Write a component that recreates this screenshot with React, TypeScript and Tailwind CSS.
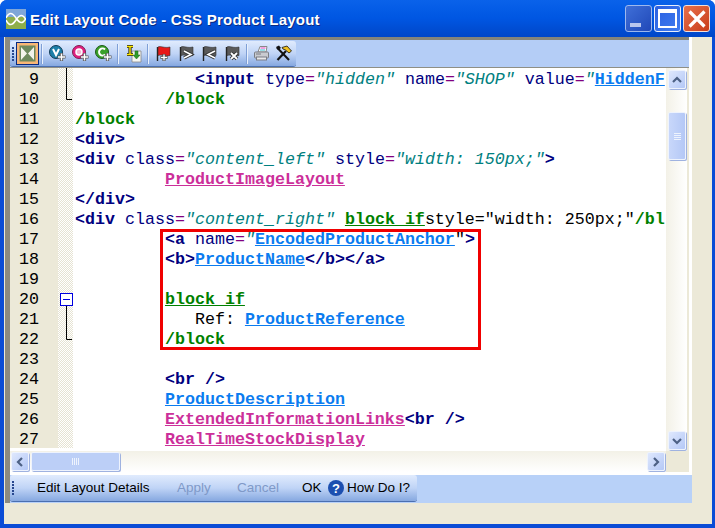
import React from "react";

const mono = "font-['Liberation_Mono','Courier_New',monospace]";
const ui = "font-['Liberation_Sans',Arial,sans-serif]";

const T = ({ c }: { c: string }) => <span className="font-bold text-[#000080]">{c}</span>;
const A = ({ c }: { c: string }) => <span className="text-[#000080]">{c}</span>;
const E = () => <span className="text-[#800080]">=</span>;
const S = ({ c }: { c: string }) => <span className="italic text-[#008080]">{c}</span>;
const L = ({ c }: { c: string }) => <span className="font-bold text-[#0a7cf0] underline">{c}</span>;
const P = ({ c }: { c: string }) => <span className="font-bold text-[#cc2f9a] underline">{c}</span>;
const G = ({ c, u }: { c: string; u?: boolean }) => (
  <span className={u ? "font-bold text-[#008000] underline" : "font-bold text-[#008000]"}>{c}</span>
);

const lines: { n: number; fold?: "end" | "open" | "line"; code?: React.ReactNode }[] = [
  {
    n: 9,
    fold: "line",
    code: (
      <>
        {"            "}
        <T c="<input" /> <A c="type" />
        <E />
        <S c={'"hidden"'} /> <A c="name" />
        <E />
        <S c={'"SHOP"'} /> <A c="value" />
        <E />
        <S c={'"'} />
        <L c="HiddenF" />
      </>
    ),
  },
  { n: 10, fold: "end", code: <>{"         "}<G c="/block" /></> },
  { n: 11, code: <G c="/block" /> },
  { n: 12, code: <T c="<div>" /> },
  {
    n: 13,
    code: (
      <>
        <T c="<div" /> <A c="class" />
        <E />
        <S c={'"content_left"'} /> <A c="style" />
        <E />
        <S c={'"width: 150px;"'} />
        <T c=">" />
      </>
    ),
  },
  { n: 14, code: <>{"         "}<P c="ProductImageLayout" /></> },
  { n: 15, code: <T c="</div>" /> },
  {
    n: 16,
    code: (
      <>
        <T c="<div" /> <A c="class" />
        <E />
        <S c={'"content_right"'} /> <G c="block if" u />
        {'style="width: 250px;"'}
        <G c="/bl" />
      </>
    ),
  },
  {
    n: 17,
    code: (
      <>
        {"         "}
        <T c="<a" /> <A c="name" />
        <E />
        <S c={'"'} />
        <L c="EncodedProductAnchor" />
        {'"'}
        <T c=">" />
      </>
    ),
  },
  {
    n: 18,
    code: (
      <>
        {"         "}
        <T c="<b>" />
        <L c="ProductName" />
        <T c="</b></a>" />
      </>
    ),
  },
  { n: 19 },
  { n: 20, fold: "open", code: <>{"         "}<G c="block if" u /></> },
  { n: 21, fold: "line", code: <>{"            Ref: "}<L c="ProductReference" /></> },
  { n: 22, fold: "end", code: <>{"         "}<G c="/block" /></> },
  { n: 23 },
  { n: 24, code: <>{"         "}<T c="<br />" /></> },
  { n: 25, code: <>{"         "}<L c="ProductDescription" /></> },
  {
    n: 26,
    code: (
      <>
        {"         "}
        <P c="ExtendedInformationLinks" />
        <T c="<br />" />
      </>
    ),
  },
  { n: 27, code: <>{"         "}<P c="RealTimeStockDisplay" /></> },
];

function Fold({ kind }: { kind?: "end" | "open" | "line" }) {
  if (!kind) return null;
  return (
    <svg width="15" height="20" viewBox="0 0 15 20" className="absolute left-0 top-0">
      {kind === "line" && <path d="M8.5 0V20" stroke="#000" fill="none" />}
      {kind === "end" && <path d="M8.5 0V11.5H14" stroke="#000" fill="none" />}
      {kind === "open" && (
        <>
          <path d="M8.5 17V20" stroke="#000" fill="none" />
          <rect x="2.5" y="5.5" width="12" height="12" fill="#fff" stroke="#0000e0" />
          <path d="M5 11.5H12" stroke="#0000e0" fill="none" />
        </>
      )}
    </svg>
  );
}

function Chevron({ dir }: { dir: "up" | "down" | "left" | "right" }) {
  const d = {
    up: "M4 10L8 6L12 10",
    down: "M4 6L8 10L12 6",
    left: "M10 4L6 8L10 12",
    right: "M6 4L10 8L6 12",
  }[dir];
  return (
    <svg width="16" height="16" viewBox="0 0 16 16">
      <path d={d} stroke="#4d6185" strokeWidth="2.2" fill="none" />
    </svg>
  );
}

function ScrollBtn({ dir }: { dir: "up" | "down" | "left" | "right" }) {
  return (
    <div className="flex h-[19px] w-[18px] shrink-0 items-center justify-center rounded-[2px] border border-[#eef3fd] bg-gradient-to-br from-[#dfe8fd] to-[#b4c8f6] shadow-[1px_1px_0_#9fb2e0]">
      <Chevron dir={dir} />
    </div>
  );
}

function Sep() {
  return <div className="mx-[3px] h-[20px] w-[1px] bg-[#e9f1fd] shadow-[-1px_0_0_#7f9fd6]" />;
}

function PlusMark() {
  return (
    <>
      <path d="M12.5 8V16M8.5 12H16.5" stroke="#555" strokeWidth="3.2" />
      <path d="M12.5 8.5V15.5M9 12H16" stroke="#fff" strokeWidth="1.5" />
    </>
  );
}

function CircleV() {
  return (
    <svg width="17" height="17" viewBox="0 0 17 17">
      <circle cx="7" cy="7" r="6.5" fill="#1c7fa8" stroke="#123a55" />
      <path d="M4 4L7 10L10 4" stroke="#fff" strokeWidth="2" fill="none" />
      <PlusMark />
    </svg>
  );
}

function CircleO() {
  return (
    <svg width="17" height="17" viewBox="0 0 17 17">
      <circle cx="7" cy="7" r="6.5" fill="#e0207f" stroke="#7a2050" />
      <circle cx="7" cy="7" r="3" fill="#f3b8d4" stroke="#fff" strokeWidth="1.5" />
      <PlusMark />
    </svg>
  );
}

function CircleC() {
  return (
    <svg width="17" height="17" viewBox="0 0 17 17">
      <circle cx="7" cy="7" r="6.5" fill="#3aa02a" stroke="#1d5a18" />
      <path d="M10 4.5A3.5 3.5 0 1 0 10 9.5" stroke="#fff" strokeWidth="2" fill="none" />
      <PlusMark />
    </svg>
  );
}

function Flag({ fill, mark }: { fill: string; mark: "plus" | "next" | "prev" | "x" }) {
  return (
    <svg width="17" height="17" viewBox="0 0 17 17">
      <path d="M2.5 16V2" stroke="#222" strokeWidth="1.4" />
      <path d="M3 2C6 0.5 9 3.5 15 2V10.5C11 12 7 9 3 10.5Z" fill={fill} stroke="#333" strokeWidth="0.6" />
      {mark === "plus" && (
        <>
          <path d="M9 9V16M5.5 12.5H12.5" stroke="#444" strokeWidth="3" />
          <path d="M9 9.5V15.5M6 12.5H12" stroke="#fff" strokeWidth="1.4" />
        </>
      )}
      {mark === "next" && (
        <>
          <path d="M6 6L13 9.5L6 13" stroke="#333" strokeWidth="3.4" fill="none" />
          <path d="M6 6L13 9.5L6 13" stroke="#fff" strokeWidth="1.6" fill="none" />
        </>
      )}
      {mark === "prev" && (
        <>
          <path d="M14 6L7 9.5L14 13" stroke="#333" strokeWidth="3.4" fill="none" />
          <path d="M14 6L7 9.5L14 13" stroke="#fff" strokeWidth="1.6" fill="none" />
        </>
      )}
      {mark === "x" && (
        <>
          <path d="M7 8L13 14M13 8L7 14" stroke="#333" strokeWidth="3.6" />
          <path d="M7 8L13 14M13 8L7 14" stroke="#fff" strokeWidth="1.8" />
        </>
      )}
    </svg>
  );
}

function InsertIcon() {
  return (
    <svg width="17" height="18" viewBox="0 0 17 18">
      <path d="M7 6H16V17H7Z" fill="#f6f6f0" stroke="#888" strokeWidth="0.8" />
      <path d="M2 1.5H8M2 9.5H8M5 1.5V9.5" stroke="#222" strokeWidth="3.2" />
      <path d="M2 1.5H8M2 9.5H8M5 1.5V9.5" stroke="#ffe800" strokeWidth="1.4" />
      <path d="M10 6V10H8L11.5 14L15 10H13V6Z" fill="#2f9a2a" stroke="#1a6a18" strokeWidth="0.5" />
    </svg>
  );
}

function PrinterIcon() {
  return (
    <svg width="17" height="17" viewBox="0 0 17 17">
      <path d="M5 7L7 1.5H14L13 7Z" fill="#fff" stroke="#888" />
      <path d="M7.5 3H12.5" stroke="#e040c0" />
      <path d="M7 5H12" stroke="#30c0d0" />
      <rect x="1.5" y="7" width="14" height="6" rx="1" fill="#c9cbd0" stroke="#7b7d85" />
      <rect x="3.5" y="12" width="10" height="3" fill="#e8e8ea" stroke="#7b7d85" />
      <path d="M3 9H8" stroke="#7b7d85" />
    </svg>
  );
}

function ToolsIcon() {
  return (
    <svg width="17" height="17" viewBox="0 0 17 17">
      <path d="M2 2.5L14 15" stroke="#111" strokeWidth="2" />
      <path d="M1 2L4 0.5L6 3L3 5Z" fill="#111" />
      <path d="M11 6L2.5 15" stroke="#111" strokeWidth="2.2" />
      <path d="M7 2.5L12 1L16.5 6L14 8L10.5 5L8 4Z" fill="#f0c020" stroke="#111" strokeWidth="0.8" />
    </svg>
  );
}

function ArrowsIcon() {
  return (
    <svg width="17" height="17" viewBox="0 0 17 17">
      <rect x="0.5" y="0.5" width="16" height="16" fill="#6e8a5e" />
      <path d="M2 2L8 8.5L2 15ZM15 2L9 8.5L15 15Z" fill="#f4f4ec" />
    </svg>
  );
}

function Grip() {
  return (
    <div className="flex flex-col gap-[1px]">
      <div className="h-[2px] w-[2px] bg-[#27478f]" />
      <div className="h-[2px] w-[2px] bg-[#27478f]" />
      <div className="h-[2px] w-[2px] bg-[#27478f]" />
      <div className="h-[2px] w-[2px] bg-[#27478f]" />
      <div className="h-[2px] w-[2px] bg-[#27478f]" />
    </div>
  );
}

function ToolIcon({ children }: { children: React.ReactNode }) {
  return <div className="flex h-[23px] w-[23px] items-center justify-center">{children}</div>;
}

function LogoIcon() {
  return (
    <svg width="20" height="20" viewBox="0 0 20 20">
      <rect width="20" height="20" fill="#8fae4a" />
      <path d="M0 0H20V8H0Z" fill="#7fa6d8" />
      <path d="M0 9C3 3 6 3 10 9S17 15 20 9M0 11C3 17 6 17 10 11S17 5 20 11" stroke="#fff" strokeWidth="1.6" fill="none" />
    </svg>
  );
}

export default function App() {
  return (
    <div className="flex h-[528px] w-[715px] flex-col overflow-hidden rounded-t-[7px] bg-[#0a4cd6]">
      {/* title bar */}
      <div className="flex h-[37px] shrink-0 items-center bg-gradient-to-b from-[#0a62ea] via-[#0056e2] to-[#0046c8] pl-[6px] pr-[5px]">
        <LogoIcon />
        <span className={`${ui} ml-[4px] pt-[4px] text-[15px] font-bold tracking-[0.22px] text-white [text-shadow:1px_1px_0_#0a2a80]`}>
          Edit Layout Code - CSS Product Layout
        </span>
        <div className="ml-auto flex gap-[2px]">
          <div className="flex h-[27px] w-[27px] items-end rounded-[3px] border border-[#9db8ee] bg-gradient-to-br from-[#3f6fd8] to-[#2148b8] pb-[4px] pl-[4px]">
            <div className="h-[4px] w-[11px] bg-[#b9c6ee]" />
          </div>
          <div className="flex h-[27px] w-[27px] items-center justify-center rounded-[3px] border border-[#e8eefc] bg-gradient-to-br from-[#2b5fe0] to-[#3f7cf0]">
            <div className="h-[19px] w-[19px] border-2 border-t-[4px] border-white" />
          </div>
          <div className="flex h-[27px] w-[27px] items-center justify-center rounded-[3px] border border-[#f4e0d8] bg-gradient-to-br from-[#e8704a] to-[#c83c18]">
            <svg width="20" height="20" viewBox="0 0 20 20">
              <path d="M2.5 2.5L17.5 17.5M17.5 2.5L2.5 17.5" stroke="#fff" strokeWidth="3.2" />
            </svg>
          </div>
        </div>
      </div>

      {/* client area */}
      <div className="mb-[4px] ml-[4px] mr-[3px] flex min-h-0 flex-1 flex-col bg-[#ece9d8]">
        <div className="flex min-h-0 flex-1 pb-[21px] pr-[20px]">
          <div className="w-[6px] shrink-0 border-l border-[#ece9d8] bg-[#8b8a80]" />
          <div className="flex min-w-0 flex-1 flex-col border-r-[3px] border-white">
            <div className="h-[3px] shrink-0 bg-[#85847a]" />
            {/* top toolbar band */}
            <div className="h-[28px] shrink-0 border-b border-[#8f8f85] bg-[#b4cdf6] pt-[1px]">
              <div className="flex h-[25px] w-[286px] items-center rounded-[3px] bg-gradient-to-b from-[#e0ebfd] via-[#c0d4f6] to-[#86a8e0] pl-[2px] shadow-[0_1px_0_#4a6fb0]">
                <Grip />
                <div className="ml-[2px] flex h-[23px] w-[23px] items-center justify-center border border-[#0a2a80] bg-[#f9b776]">
                  <ArrowsIcon />
                </div>
                <Sep />
                <ToolIcon><CircleV /></ToolIcon>
                <ToolIcon><CircleO /></ToolIcon>
                <ToolIcon><CircleC /></ToolIcon>
                <Sep />
                <ToolIcon><InsertIcon /></ToolIcon>
                <Sep />
                <ToolIcon><Flag fill="#e81818" mark="plus" /></ToolIcon>
                <ToolIcon><Flag fill="#5a5a5a" mark="next" /></ToolIcon>
                <ToolIcon><Flag fill="#5a5a5a" mark="prev" /></ToolIcon>
                <ToolIcon><Flag fill="#5a5a5a" mark="x" /></ToolIcon>
                <Sep />
                <div className="-ml-[1px]"><ToolIcon><PrinterIcon /></ToolIcon></div>
                <div className="-ml-[1px]"><ToolIcon><ToolsIcon /></ToolIcon></div>
              </div>
            </div>

            {/* editor */}
            <div className="flex min-h-0 flex-1 flex-col pr-[2px]">
              <div className="relative flex min-h-0 flex-1 bg-white">
                <div className="relative min-w-0 flex-1 overflow-hidden">
                  {lines.map((l) => (
                    <div key={l.n} className={`${mono} flex h-[20px] text-[16.67px] leading-[24px]`}>
                      <div className="h-[20px] w-[48px] shrink-0 bg-[#ece9d8] pr-[19px] text-right text-black">{l.n}</div>
                      <div className="relative h-[20px] w-[15px] shrink-0 bg-[#f1efe4] bg-[repeating-conic-gradient(#e6e3d2_0_25%,#ffffff_0_50%)] bg-[length:2px_2px]">
                        <Fold kind={l.fold} />
                      </div>
                      <pre className={`${mono} pl-[2px] text-black`}>{l.code}</pre>
                    </div>
                  ))}
                  <div className="absolute left-[150px] top-[161px] h-[121px] w-[321px] border-[3px] border-[#f00000]" />
                </div>
                {/* vertical scrollbar */}
                <div className="flex w-[21px] shrink-0 flex-col items-start bg-gradient-to-r from-[#f3f1e7] to-white pb-[1px] pl-[2px] pt-[2px]">
                  <ScrollBtn dir="up" />
                  <div className="mt-[23px] flex h-[48px] w-[18px] items-center justify-center rounded-[2px] border border-[#eef3fd] bg-gradient-to-r from-[#c8d7fa] to-[#b4c8f6] shadow-[1px_1px_0_#9fb2e0]">
                    <div className="flex flex-col gap-[1px]">
                      <div className="h-[1px] w-[7px] bg-[#eef3fd]" />
                      <div className="h-[1px] w-[7px] bg-[#eef3fd]" />
                      <div className="h-[1px] w-[7px] bg-[#eef3fd]" />
                      <div className="h-[1px] w-[7px] bg-[#eef3fd]" />
                    </div>
                  </div>
                  <div className="flex-1" />
                  <ScrollBtn dir="down" />
                </div>
              </div>
              {/* horizontal scrollbar */}
              <div className="flex h-[21px] shrink-0">
                <div className="flex min-w-0 flex-1 items-center bg-gradient-to-b from-[#f3f1e7] to-white pl-[1px] pr-[1px]">
                  <ScrollBtn dir="left" />
                  <div className="ml-[2px] flex h-[19px] w-[89px] items-center justify-center rounded-[2px] border border-[#eef3fd] bg-[#bccff7] shadow-[1px_1px_0_#9fb2e0]">
                    <div className="flex gap-[1px]">
                      <div className="h-[7px] w-[1px] bg-[#eef3fd]" />
                      <div className="h-[7px] w-[1px] bg-[#eef3fd]" />
                      <div className="h-[7px] w-[1px] bg-[#eef3fd]" />
                      <div className="h-[7px] w-[1px] bg-[#eef3fd]" />
                    </div>
                  </div>
                  <div className="flex-1" />
                  <ScrollBtn dir="right" />
                </div>
                <div className="w-[21px] shrink-0 bg-[#ece9d8]" />
              </div>
            </div>
            <div className="h-[3px] shrink-0 bg-white" />
            {/* bottom toolbar band */}
            <div className={`${ui} -mr-[3px] h-[28px] shrink-0 whitespace-nowrap bg-[#b8d1f8] text-[13.5px] text-black`}>
              <div className="flex h-[26px] w-[407px] items-center rounded-[3px] bg-gradient-to-b from-[#e0ebfd] via-[#c0d4f6] to-[#86a8e0] pl-[2px] shadow-[0_1px_0_#4a6fb0]">
                <Grip />
                <span className="ml-[23px] w-[113px]">Edit Layout Details</span>
                <span className="ml-[27px] w-[33px] text-[#7f99c8]">Apply</span>
                <span className="ml-[27px] w-[40px] text-[#7f99c8]">Cancel</span>
                <span className="ml-[25px] w-[18px]">OK</span>
                <svg width="16" height="16" viewBox="0 0 16 16" className="ml-[8px]">
                  <circle cx="8" cy="8" r="8" fill="#1c4fb0" />
                  <text x="8" y="12.5" textAnchor="middle" fontSize="13" fontWeight="700" fill="#fff" fontFamily="Liberation Sans">?</text>
                </svg>
                <span className="ml-[3px]">How Do I?</span>
              </div>
            </div>
          </div>
        </div>
      </div>
    </div>
  );
}
